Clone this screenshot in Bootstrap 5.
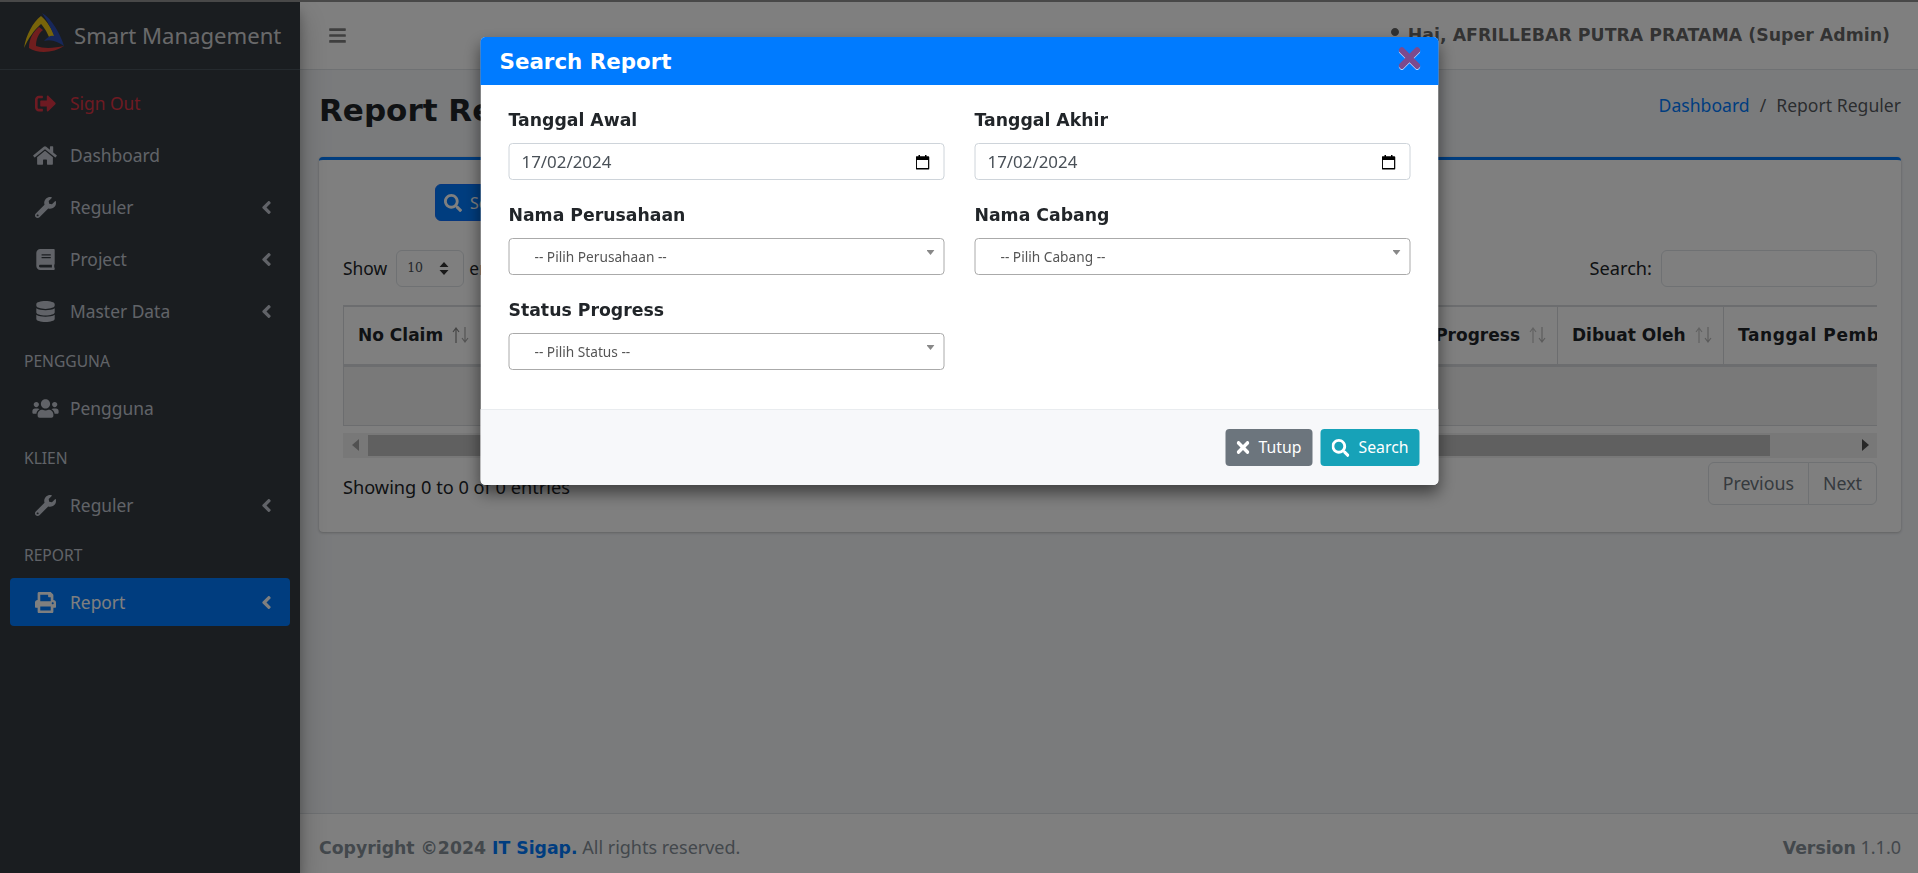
<!DOCTYPE html>
<html lang="id">
<head>
  <meta charset="UTF-8">
  <meta name="viewport" content="width=device-width, initial-scale=1">
  <title>Report Reguler</title>
  <link href="https://cdn.jsdelivr.net/npm/bootstrap@5.3.3/dist/css/bootstrap.min.css" rel="stylesheet">
  <style>
    html, body { height: 100%; overflow: hidden; }
    body { font-family: "Noto Sans", sans-serif; font-size: 17.4px; color: #212529; background: #f4f6f9; }
    b, strong, th, .tebal { font-family: "DejaVu Sans", sans-serif; font-weight: 700; }
    .ico { fill: currentColor; display: inline-block; flex: none; }
    .topstrip { height: 2px; background: #484848; position: relative; z-index: 1060; }
    .shell { height: 871px; }

    /* sidebar */
    .sisi { width: 300px; flex: none; background: #343a40; box-shadow: 0 14px 28px rgba(0,0,0,.25), 0 10px 10px rgba(0,0,0,.22); position: relative; z-index: 2; }
    .merek { height: 68px; border-bottom: 1px solid #4b545c; padding-left: 24px; gap: 9px; color: rgba(255,255,255,.8); font-size: 22.1px; }
    .merek svg { margin-top: -5px; }
    .menu { padding: 9px 10px 0; gap: 4px; }
    .menu .nav-link { height: 48px; display: flex; align-items: center; color: #c2c7d0; padding: 0 18px 0 0; border-radius: 4px; }
    .menu .nav-link.aktif { background: #007bff; color: #fff; }
    .menu .nav-link.keluar { color: #dc3545; }
    .ikonbox { width: 60px; padding-left: 10px; display: flex; justify-content: center; flex: none; }
    .panah { margin-left: auto; }
    .judulmenu { height: 41px; line-height: 45px; color: #c2c7d0; font-size: 15.6px; padding-left: 14px; }

    /* atas */
    .atas { height: 68px; background: #fff; border-bottom: 1px solid #dee2e6; padding: 0 28px 0 29px; color: rgba(0,0,0,.5); }
    .userinfo { font-size: 17.36px; gap: 6px; color: rgba(0,0,0,.62); }
    .isi { background: #f4f6f9; }
    .judulhal { height: 87px; padding: 0 17px 6px 19px; }
    .judulhal h1 { font-family: "DejaVu Sans", sans-serif; font-weight: 700; font-size: 31px; margin: 0; color: #212529; }
    .judulhal .breadcrumb { font-size: 17.6px; margin: 0 0 10px; --bs-breadcrumb-item-padding-x: 10px; }
    .judulhal a { color: #007bff; text-decoration: none; }
    .kartu { margin: 0 17px 0 19px; background: #fff; border: 0; border-top: 3px solid #007bff; border-radius: 4px; box-shadow: 0 0 1px rgba(0,0,0,.125), 0 1px 3px rgba(0,0,0,.2); padding: 24px 24px 27px; }
    .tbl-cari { margin-left: 92px; height: 37px; width: 130px; background: #007bff; }
    .barisatas { margin-top: 29px; height: 37px; margin-bottom: 18px; }
    .labelcari { font-size: 18.2px; }
    .pilihjml { width: 68px; height: 37px; margin: 0 5px 0 9px; font-family: "DejaVu Serif", serif; font-size: 12.5px; padding: 0 0 0 10px; color: #495057;
      background: #fff url("data:image/svg+xml,%3Csvg xmlns='http://www.w3.org/2000/svg' viewBox='0 0 10 13'%3E%3Cpath fill='%23333' d='M5 0l4.500 5H.5zM5 13L.5 8h9z'/%3E%3C/svg%3E") no-repeat right 14px center / 10px 13px; }
    .kotakcari { width: 216px; height: 37px; margin-left: 9px; }
    .bungkus { overflow: hidden; }
    .tabel { table-layout: fixed; width: 1700px; margin: 0; border-collapse: collapse; }
    .tabel th { font-size: 17px; height: 59px; padding: 0 15px 0 14px; vertical-align: middle; border: 1px solid #d8dbde; border-top-width: 2px; border-bottom: 3px solid #d8dbde; white-space: nowrap; overflow: hidden; }
    .tabel th.mepet { padding-right: 10px; }
    .tabel th.renggang { letter-spacing: .6px; }
    .tabel td { height: 60px; background: #f2f2f2; border: 1px solid #d8dbde; border-top: 0; }
    .urut { fill: none; stroke-width: 1.2; margin-left: 9px; vertical-align: -2px; --naik: #c4c4c4; --turun: #b8b8b8; }
    .urut.gelap { --naik: #888; --turun: #aaa; }
    .gulir { margin-top: 7px; height: 25px; background: #f1f1f1; padding: 2px 0; }
    .jempol { background: #c1c1c1; height: 21px; flex: 1; }
    .segi-k, .segi-n { width: 25px; flex: none; display: flex; justify-content: center; align-items: center; }
    .segi-k i { border-right: 7px solid #a3a3a3; border-top: 6px solid transparent; border-bottom: 6px solid transparent; }
    .segi-n i { border-left: 7px solid #505050; border-top: 6px solid transparent; border-bottom: 6px solid transparent; }
    .segi-n { width: 107px; justify-content: flex-end; padding-right: 8px; }
    .bawahtabel { margin-top: 4px; height: 43px; }
    .infotabel { font-size: 18.2px; margin-top: 9px; }
    .bawahtabel .pagination { margin: 0; }
    .bawahtabel .page-item.disabled .page-link { height: 43px; padding: 0 14px; line-height: 41px; font-size: 17.8px; color: #6c757d; background: #fff; border-color: #dee2e6; }
    .kaki { margin-top: auto; height: 60px; background: #fff; border-top: 1px solid #dee2e6; padding: 8px 17px 0 19px; color: #869099; font-size: 18px; }
    .kaki b { font-size: 17.3px; }
    .kaki .biru { color: #007bff; }

    /* modal */
    .modal.d-block { overflow: hidden; }
    .dialog-cari { max-width: 958px; margin: 37px auto 0; transform: translateX(0.5px); }
    .dialog-cari .modal-content { border: 0; border-radius: 5px; box-shadow: 0 .5rem 1rem rgba(0,0,0,.5); }
    .kepala { height: 48px; background: #007bff; color: #fff; padding: 0 18px 0 19px; border-radius: 5px 5px 0 0; }
    .kepala h5 { font-family: "DejaVu Sans", sans-serif; font-weight: 700; font-size: 21.4px; margin: 2px 0 0; }
    .tutupx { color: #7c4a8e; background: none; border: 0; padding: 0; margin-top: -7px; line-height: 0; filter: drop-shadow(0 1px 0 rgba(255,255,255,.7)); }
    .badan { padding: 23px 28px 16px; }
    .badan .row { --bs-gutter-x: 30px; }
    .isian { margin-bottom: 23px; }
    .isian label { display: block; font-family: "DejaVu Sans", sans-serif; font-weight: 700; font-size: 17.3px; line-height: 24px; margin-bottom: 11px; color: #212529; }
    .tgl { height: 37px; padding: 0 12px; font-size: 16.9px; color: #495057; border-color: #ced4da; border-radius: 4px;
      background: #fff url("data:image/svg+xml,%3Csvg xmlns='http://www.w3.org/2000/svg' viewBox='0 0 14 16'%3E%3Cpath fill='none' stroke='%23000' stroke-width='1.5' d='M1.2 3h11.6a.6.6 0 0 1 .5.6v10.6a.6.6 0 0 1-.5.6H1.200a.6.6 0 0 1-.5-.6V3.600a.6.6 0 0 1 .5-.6z'/%3E%3Cpath d='M.5 3h13v3H.5zM3 1h1.500v2H3zM9.500 1H11v2H9.500z'/%3E%3C/svg%3E") no-repeat right 14px center / 14px 16px; }
    .pilih2 { height: 37px; padding: 2px 26px 0 25px; font-size: 13.7px; color: #555; border: 1px solid #aaa; border-radius: 4px; -webkit-appearance: none; appearance: none; width: 100%;
      background: #fff url("data:image/svg+xml,%3Csvg xmlns='http://www.w3.org/2000/svg' viewBox='0 0 8 5'%3E%3Cpath fill='%23888' d='M0 0h8L4 5z'/%3E%3C/svg%3E") no-repeat right 9px top 11px / 8px 5px; }
    .kaki-modal { height: 76px; background: #f7f8fa; border-top: 1px solid #e9ecef; padding: 0 19px; gap: 8px; border-radius: 0 0 5px 5px; }
    .kaki-modal .btn { height: 37px; padding: 0; font-size: 15.8px; display: flex; align-items: center; justify-content: center; gap: 9px; border-radius: 4px; color: #fff; border: 0; }
    .tb-tutup { width: 87px; background: #6c757d; }
    .tb-search { width: 99px; background: #17a2b8; }
  </style>
</head>
<body>

<svg width="0" height="0" class="d-block position-absolute">
  <defs>
    <symbol id="i-search" viewBox="0 0 512 512"><path d="M505 442.7L405.3 343c-4.5-4.5-10.6-7-17-7H372c27.6-35.3 44-79.7 44-128C416 93.1 322.9 0 208 0S0 93.1 0 208s93.1 208 208 208c48.3 0 92.7-16.4 128-44v16.3c0 6.4 2.5 12.500 7 17l99.700 99.700c9.400 9.400 24.600 9.400 33.900 0l28.300-28.300c9.400-9.400 9.400-24.600.1-34zM208 336c-70.700 0-128-57.200-128-128 0-70.700 57.200-128 128-128 70.700 0 128 57.200 128 128 0 70.700-57.200 128-128 128z"/></symbol>
    <symbol id="i-times" viewBox="0 80 352 352"><path d="M242.72 256l100.070-100.070c12.280-12.280 12.280-32.190 0-44.480l-22.240-22.240c-12.280-12.280-32.190-12.280-44.480 0L176 189.280 75.930 89.210c-12.280-12.280-32.190-12.280-44.480 0L9.210 111.450c-12.280 12.280-12.280 32.190 0 44.480L109.280 256 9.210 356.070c-12.280 12.280-12.280 32.190 0 44.480l22.240 22.240c12.280 12.280 32.200 12.280 44.480 0L176 322.720l100.070 100.070c12.280 12.280 32.200 12.280 44.480 0l22.240-22.240c12.280-12.280 12.280-32.190 0-44.480L242.720 256z"/></symbol>
    <symbol id="i-home" viewBox="0 0 576 512"><path d="M280.370 148.260L96 300.110V464a16 16 0 0 0 16 16l112.060-.29a16 16 0 0 0 15.920-16V368a16 16 0 0 1 16-16h64a16 16 0 0 1 16 16v95.640a16 16 0 0 0 16 16.050L464 480a16 16 0 0 0 16-16V300L295.670 148.260a12.190 12.190 0 0 0-15.300 0zM571.600 251.470L488 182.560V44.050a12 12 0 0 0-12-12h-56a12 12 0 0 0-12 12v72.610L318.470 43a48 48 0 0 0-61 0L4.340 251.470a12 12 0 0 0-1.600 16.900l25.500 31A12 12 0 0 0 45.150 301l235.220-193.740a12.190 12.190 0 0 1 15.300 0L530.900 301a12 12 0 0 0 16.900-1.600l25.500-31a12 12 0 0 0-1.700-16.930z"/></symbol>
    <symbol id="i-wrench" viewBox="0 0 512 512"><path d="M507.730 109.100c-2.240-9.030-13.540-12.090-20.120-5.510l-74.360 74.360-67.880-11.310-11.310-67.880 74.360-74.360c6.620-6.620 3.430-17.900-5.660-20.160-47.380-11.740-99.550.91-136.580 37.930-39.640 39.640-50.550 97.100-34.050 147.200L18.740 402.760c-24.990 24.990-24.990 65.510 0 90.500 24.990 24.990 65.510 24.990 90.500 0l213.210-213.210c50.120 16.710 107.470 5.680 147.370-34.220 37.070-37.070 49.700-89.320 37.910-136.730zM64 472c-13.250 0-24-10.750-24-24 0-13.260 10.750-24 24-24s24 10.740 24 24c0 13.250-10.750 24-24 24z"/></symbol>
    <symbol id="i-book" viewBox="0 0 448 512"><path d="M448 360V24c0-13.300-10.700-24-24-24H96C43 0 0 43 0 96v320c0 53 43 96 96 96h328c13.300 0 24-10.700 24-24v-16c0-7.500-3.500-14.300-8.900-18.700-4.200-15.400-4.200-59.300 0-74.700 5.400-4.300 8.900-11.100 8.900-18.600zM128 134c0-3.300 2.700-6 6-6h212c3.300 0 6 2.700 6 6v20c0 3.300-2.700 6-6 6H134c-3.300 0-6-2.700-6-6v-20zm0 64c0-3.300 2.700-6 6-6h212c3.300 0 6 2.700 6 6v20c0 3.300-2.700 6-6 6H134c-3.300 0-6-2.700-6-6v-20zm253.400 250H96c-17.700 0-32-14.300-32-32 0-17.600 14.400-32 32-32h285.400c-1.900 17.100-1.900 46.900 0 64z"/></symbol>
    <symbol id="i-db" viewBox="0 0 448 512"><path d="M448 73.143v45.714C448 159.143 347.667 192 224 192S0 159.143 0 118.857V73.143C0 32.857 100.333 0 224 0s224 32.857 224 73.143zM448 176v102.857C448 319.143 347.667 352 224 352S0 319.143 0 278.857V176c48.125 33.143 136.208 48.572 224 48.572S399.874 209.143 448 176zm0 160v102.857C448 479.143 347.667 512 224 512S0 479.143 0 438.857V336c48.125 33.143 136.208 48.572 224 48.572S399.874 369.143 448 336z"/></symbol>
    <symbol id="i-users" viewBox="0 0 640 512"><path d="M96 224c35.300 0 64-28.700 64-64s-28.700-64-64-64-64 28.700-64 64 28.700 64 64 64zm448 0c35.300 0 64-28.700 64-64s-28.700-64-64-64-64 28.700-64 64 28.700 64 64 64zm32 32h-64c-17.600 0-33.500 7.100-45.100 18.600 40.300 22.100 68.900 62 75.100 109.400h66c17.700 0 32-14.300 32-32v-32c0-35.300-28.700-64-64-64zm-256 0c61.900 0 112-50.100 112-112S381.900 32 320 32 208 82.100 208 144s50.100 112 112 112zm76.800 32h-8.300c-20.800 10-43.900 16-68.500 16s-47.600-6-68.500-16h-8.300C179.600 288 128 339.600 128 403.200V432c0 26.500 21.500 48 48 48h288c26.500 0 48-21.500 48-48v-28.800c0-63.600-51.600-115.200-115.200-115.200zm-223.700-13.400C161.500 263.100 145.600 256 128 256H64c-35.300 0-64 28.700-64 64v32c0 17.700 14.300 32 32 32h65.900c6.300-47.400 34.900-87.300 75.200-109.400z"/></symbol>
    <symbol id="i-print" viewBox="0 0 512 512"><path d="M448 192V77.250c0-8.490-3.370-16.620-9.370-22.630L393.370 9.370c-6-6-14.140-9.370-22.630-9.370H96C78.330 0 64 14.330 64 32v160c-35.350 0-64 28.650-64 64v112c0 8.840 7.160 16 16 16h48v96c0 17.670 14.330 32 32 32h320c17.670 0 32-14.330 32-32v-96h48c8.840 0 16-7.160 16-16V256c0-35.350-28.650-64-64-64zm-64 256H128v-96h256v96zm0-224H128V64h192v48c0 8.840 7.160 16 16 16h48v96zm48 72c-13.250 0-24-10.750-24-24 0-13.260 10.750-24 24-24s24 10.740 24 24c0 13.250-10.750 24-24 24z"/></symbol>
    <symbol id="i-out" viewBox="0 0 512 512"><path d="M497 273L329 441c-15 15-41 4.500-41-17v-96H152c-13.300 0-24-10.700-24-24v-96c0-13.300 10.700-24 24-24h136V88c0-21.400 25.900-32 41-17l168 168c9.300 9.400 9.300 24.600 0 34zM192 436v-40c0-6.600-5.400-12-12-12H96c-17.700 0-32-14.300-32-32V160c0-17.700 14.300-32 32-32h84c6.600 0 12-5.400 12-12V76c0-6.600-5.400-12-12-12H96c-53 0-96 43-96 96v192c0 53 43 96 96 96h84c6.600 0 12-5.400 12-12z"/></symbol>
    <symbol id="i-user" viewBox="0 0 448 512"><path d="M224 256c70.700 0 128-57.300 128-128S294.700 0 224 0 96 57.300 96 128s57.300 128 128 128zm89.600 32h-16.700c-22.200 10.200-46.900 16-72.900 16s-50.600-5.800-72.900-16h-16.700C60.200 288 0 348.200 0 422.400V464c0 26.500 21.500 48 48 48h352c26.500 0 48-21.500 48-48v-41.600c0-74.200-60.200-134.400-134.400-134.400z"/></symbol>
    <symbol id="i-angle" viewBox="0 0 256 512"><path d="M31.700 239l136-136c9.400-9.400 24.600-9.400 33.900 0l22.600 22.600c9.400 9.400 9.400 24.600 0 33.900L127.900 256l96.400 96.400c9.400 9.400 9.400 24.600 0 33.900L201.700 409c-9.400 9.400-24.600 9.400-33.900 0l-136-136c-9.500-9.400-9.500-24.600-.1-34z"/></symbol>
    <symbol id="i-bars" viewBox="0 0 448 512"><path d="M16 132h416c8.837 0 16-7.163 16-16V76c0-8.837-7.163-16-16-16H16C7.163 60 0 67.163 0 76v40c0 8.837 7.163 16 16 16zm0 160h416c8.837 0 16-7.163 16-16v-40c0-8.837-7.163-16-16-16H16c-8.837 0-16 7.163-16 16v40c0 8.837 7.163 16 16 16zm0 160h416c8.837 0 16-7.163 16-16v-40c0-8.837-7.163-16-16-16H16c-8.837 0-16 7.163-16 16v40c0 8.837 7.163 16 16 16z"/></symbol>
    <symbol id="i-sort" viewBox="0 0 18 16"><path style="stroke:var(--naik)" d="M4 16V1M1 5l3-4 3 4"/><path style="stroke:var(--turun)" d="M13 0v15M10 11l3 4 3-4"/></symbol>
  </defs>
</svg>

<div class="topstrip"></div>

<div class="shell d-flex">
  <!-- sidebar -->
  <aside class="sisi d-flex flex-column">
    <div class="merek d-flex align-items-center">
      <svg width="41" height="41" viewBox="0 0 41 41">
        <path fill="#f0c814" d="M0 35C2 22 9 9 17 3c6 5 11 13 14 21h-6c-3-7-6-11-8-13C10 17 4 26 0 35z"/>
        <path fill="#2f4fb4" d="M18 0c10 6 18 20 22 33-6-4-12-7-20-5 4-4 6-6 10-5C27 15 24 9 18 0z"/>
        <path fill="#e03c3c" d="M15 14l4 3c-5 4-7 10-7 16 8 3 19 2 28 0-10 7-26 8-35 2 0-9 4-16 10-21z"/>
      </svg>
      <span>Smart Management</span>
    </div>
    <nav class="nav flex-column flex-nowrap menu">
      <a class="nav-link keluar" href="#"><span class="ikonbox"><svg class="ico" width="21" height="21"><use href="#i-out"/></svg></span>Sign Out</a>
      <a class="nav-link" href="#"><span class="ikonbox"><svg class="ico" width="24" height="21"><use href="#i-home"/></svg></span>Dashboard</a>
      <a class="nav-link" href="#"><span class="ikonbox"><svg class="ico" width="21" height="21"><use href="#i-wrench"/></svg></span>Reguler<svg class="ico panah" width="11" height="21"><use href="#i-angle"/></svg></a>
      <a class="nav-link" href="#"><span class="ikonbox"><svg class="ico" width="19" height="21"><use href="#i-book"/></svg></span>Project<svg class="ico panah" width="11" height="21"><use href="#i-angle"/></svg></a>
      <a class="nav-link" href="#"><span class="ikonbox"><svg class="ico" width="19" height="21"><use href="#i-db"/></svg></span>Master Data<svg class="ico panah" width="11" height="21"><use href="#i-angle"/></svg></a>
      <div class="judulmenu">PENGGUNA</div>
      <a class="nav-link" href="#"><span class="ikonbox"><svg class="ico" width="27" height="21"><use href="#i-users"/></svg></span>Pengguna</a>
      <div class="judulmenu">KLIEN</div>
      <a class="nav-link" href="#"><span class="ikonbox"><svg class="ico" width="21" height="21"><use href="#i-wrench"/></svg></span>Reguler<svg class="ico panah" width="11" height="21"><use href="#i-angle"/></svg></a>
      <div class="judulmenu">REPORT</div>
      <a class="nav-link aktif" href="#"><span class="ikonbox"><svg class="ico" width="21" height="21"><use href="#i-print"/></svg></span>Report<svg class="ico panah" width="11" height="21"><use href="#i-angle"/></svg></a>
    </nav>
  </aside>

  <!-- main -->
  <div class="isi flex-grow-1 d-flex flex-column" style="min-width:0">
    <header class="atas d-flex align-items-center justify-content-between">
      <svg class="ico" width="17" height="19"><use href="#i-bars"/></svg>
      <div class="userinfo d-flex align-items-center">
        <svg class="ico" width="14" height="16"><use href="#i-user"/></svg>
        <b>Hai, AFRILLEBAR PUTRA PRATAMA (Super Admin)</b>
      </div>
    </header>

    <div class="judulhal d-flex align-items-center justify-content-between">
      <h1>Report Reguler</h1>
      <ol class="breadcrumb">
        <li class="breadcrumb-item"><a href="#">Dashboard</a></li>
        <li class="breadcrumb-item active">Report Reguler</li>
      </ol>
    </div>

    <section class="kartu">
      <button class="btn btn-primary tbl-cari d-flex align-items-center gap-2 p-0 ps-2"><svg class="ico" width="18" height="18"><use href="#i-search"/></svg>Search</button>
      <div class="barisatas d-flex align-items-center justify-content-between">
        <div class="d-flex align-items-center">Show
          <select class="form-select pilihjml"><option>10</option></select>
          entries
        </div>
        <div class="d-flex align-items-center labelcari">Search:<input class="form-control kotakcari" type="text"></div>
      </div>
      <div class="bungkus">
        <table class="tabel">
          <colgroup><col style="width:150px"><col style="width:500px"><col style="width:564px"><col style="width:166px"><col style="width:320px"></colgroup>
          <thead>
            <tr>
              <th>No Claim<svg class="urut gelap" width="18" height="16"><use href="#i-sort"/></svg></th>
              <th>Nama Perusahaan<svg class="urut" width="18" height="16"><use href="#i-sort"/></svg></th>
              <th class="text-end mepet">Status Progress<svg class="urut" width="18" height="16"><use href="#i-sort"/></svg></th>
              <th>Dibuat Oleh<svg class="urut" width="18" height="16"><use href="#i-sort"/></svg></th>
              <th class="renggang">Tanggal Pembuatan</th>
            </tr>
          </thead>
          <tbody><tr><td colspan="5"></td></tr></tbody>
        </table>
      </div>
      <div class="gulir d-flex">
        <span class="segi-k"><i></i></span>
        <span class="jempol"></span>
        <span class="segi-n"><i></i></span>
      </div>
      <div class="bawahtabel d-flex align-items-center justify-content-between">
        <div class="infotabel">Showing 0 to 0 of 0 entries</div>
        <ul class="pagination">
          <li class="page-item disabled"><a class="page-link" href="#">Previous</a></li>
          <li class="page-item disabled"><a class="page-link" href="#">Next</a></li>
        </ul>
      </div>
    </section>

    <footer class="kaki d-flex align-items-center justify-content-between">
      <div><b>Copyright ©2024 <span class="biru">IT Sigap.</span></b> All rights reserved.</div>
      <div><b>Version</b> 1.1.0</div>
    </footer>
  </div>
</div>

<!-- modal search -->
<div class="modal-backdrop show"></div>
<div class="modal d-block" tabindex="-1">
  <div class="modal-dialog dialog-cari">
    <div class="modal-content">
      <div class="kepala d-flex align-items-center justify-content-between">
        <h5>Search Report</h5>
        <button class="tutupx" type="button" aria-label="Close"><svg class="ico" width="22" height="22"><use href="#i-times"/></svg></button>
      </div>
      <div class="badan">
        <div class="row">
          <div class="col-6 isian"><label>Tanggal Awal</label><input class="form-control tgl" type="text" value="17/02/2024"></div>
          <div class="col-6 isian"><label>Tanggal Akhir</label><input class="form-control tgl" type="text" value="17/02/2024"></div>
          <div class="col-6 isian"><label>Nama Perusahaan</label><select class="pilih2"><option>-- Pilih Perusahaan --</option></select></div>
          <div class="col-6 isian"><label>Nama Cabang</label><select class="pilih2"><option>-- Pilih Cabang --</option></select></div>
          <div class="col-6 isian"><label>Status Progress</label><select class="pilih2"><option>-- Pilih Status --</option></select></div>
        </div>
      </div>
      <div class="kaki-modal d-flex align-items-center justify-content-end">
        <button class="btn tb-tutup" type="button"><svg class="ico" width="13" height="13"><use href="#i-times"/></svg>Tutup</button>
        <button class="btn tb-search" type="button"><svg class="ico" width="18" height="18"><use href="#i-search"/></svg>Search</button>
      </div>
    </div>
  </div>
</div>

<script src="https://cdn.jsdelivr.net/npm/bootstrap@5.3.3/dist/js/bootstrap.bundle.min.js"></script>
</body>
</html>
